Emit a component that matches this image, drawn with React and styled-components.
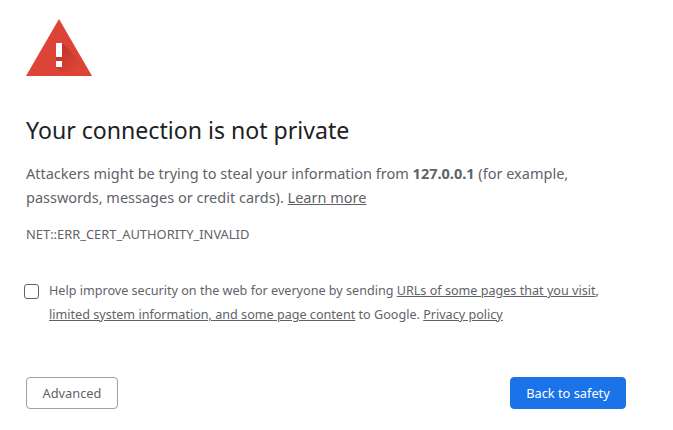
import React from "react";
import styled, { createGlobalStyle } from "styled-components";

const GlobalStyle = createGlobalStyle`
  html, body {
    margin: 0;
    background: #fff;
  }
`;

const Page = styled.div`
  width: 600px;
  padding: 19px 0 0 26px;
  font-family: "Noto Sans", "Open Sans", sans-serif;
  color: #5f6368;
`;

const Icon = styled.svg`
  display: block;
  width: 66px;
  height: 57px;
`;

const Heading = styled.h1`
  margin: 38px 0 0;
  font-size: 23.1px;
  line-height: 32px;
  font-weight: 400;
  color: #202124;
`;

const Message = styled.p`
  margin: 15px 0 0;
  font-size: 14.5px;
  line-height: 24px;

  a {
    color: #5f6368;
  }
  strong {
    font-weight: 700;
  }
`;

const ErrorCode = styled.div`
  margin-top: 17px;
  font-size: 12.9px;
  line-height: 16px;
`;

const Consent = styled.div`
  display: flex;
  align-items: flex-start;
  gap: 10px;
  margin: 37px 0 0 -2px;
  font-size: 12.6px;
  line-height: 24px;

  a {
    color: #5f6368;
  }
`;

const Checkbox = styled.span`
  flex: none;
  width: 13px;
  height: 13px;
  margin-top: 5px;
  border: 1px solid #5f6368;
  border-radius: 3px;
`;

const Actions = styled.div`
  display: flex;
  justify-content: space-between;
  margin-top: 50px;
`;

const Button = styled.button`
  height: 32px;
  padding: 0 0 1px;
  width: ${(p) => (p.$primary ? "116px" : "92px")};
  border: 1px solid ${(p) => (p.$primary ? "#1a73e8" : "#9aa0a6")};
  border-radius: 4px;
  background: ${(p) => (p.$primary ? "#1a73e8" : "#fff")};
  color: ${(p) => (p.$primary ? "#fff" : "#5f6368")};
  font-family: inherit;
  font-size: 12.8px;
`;

const WarningIcon = () => (
  <Icon viewBox="0 0 66 57">
    <defs>
      <linearGradient id="shade" gradientUnits="userSpaceOnUse" x1="32" y1="34" x2="48" y2="50">
        <stop offset="0" stopColor="#a92a1e" stopOpacity="0.55" />
        <stop offset="1" stopColor="#a92a1e" stopOpacity="0" />
      </linearGradient>
    </defs>
    <path d="M33 0L66 57H0z" fill="#db4437" />
    <path d="M36 24L58 46V57H39L30 48h6v-6h-6v-4h6z" fill="url(#shade)" />
    <path d="M30 24h6v14h-6zM30 42h6v6h-6z" fill="#fff" />
  </Icon>
);

export default function App() {
  return (
    <>
      <GlobalStyle />
      <Page>
        <WarningIcon />
        <Heading>Your connection is not private</Heading>
        <Message>
          Attackers might be trying to steal your information from <strong>127.0.0.1</strong> (for
          example, passwords, messages or credit cards). <a href="#learn">Learn more</a>
        </Message>
        <ErrorCode>NET::ERR_CERT_AUTHORITY_INVALID</ErrorCode>
        <Consent>
          <Checkbox />
          <div>
            Help improve security on the web for everyone by sending{" "}
            <a href="#urls">URLs of some pages that you visit</a>,{" "}
            <a href="#info">limited system information, and some page content</a> to Google.{" "}
            <a href="#privacy">Privacy policy</a>
          </div>
        </Consent>
        <Actions>
          <Button>Advanced</Button>
          <Button $primary>Back to safety</Button>
        </Actions>
      </Page>
    </>
  );
}
